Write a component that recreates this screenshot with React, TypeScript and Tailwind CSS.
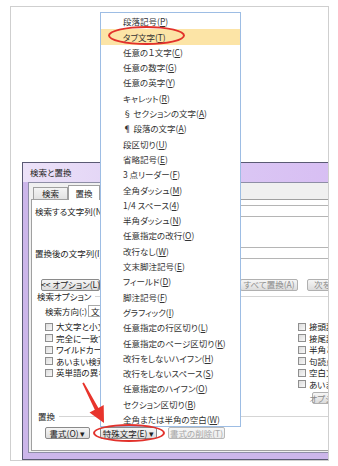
import React from "react";

const jp = "font-['Noto_Sans_CJK_JP','Liberation_Sans',sans-serif] [font-feature-settings:'palt']";

// 特殊文字メニューの項目 [ラベル, アクセスキー]
const menuItems: [string, string][] = [
  ["段落記号", "P"],
  ["タブ文字", "T"],
  ["任意の１文字", "C"],
  ["任意の数字", "G"],
  ["任意の英字", "Y"],
  ["キャレット", "R"],
  ["§ セクションの文字", "A"],
  ["¶ 段落の文字", "A"],
  ["段区切り", "U"],
  ["省略記号", "E"],
  ["3 点リーダー", "F"],
  ["全角ダッシュ", "M"],
  ["1/4 スペース", "4"],
  ["半角ダッシュ", "N"],
  ["任意指定の改行", "O"],
  ["改行なし", "W"],
  ["文末脚注記号", "E"],
  ["フィールド", "D"],
  ["脚注記号", "F"],
  ["グラフィック", "I"],
  ["任意指定の行区切り", "L"],
  ["任意指定のページ区切り", "K"],
  ["改行をしないハイフン", "H"],
  ["改行をしないスペース", "S"],
  ["任意指定のハイフン", "O"],
  ["セクション区切り", "B"],
  ["全角または半角の空白", "W"],
];

const leftChecks = [
  "大文字と小文字を区別する",
  "完全に一致する単語だけを検索する",
  "ワイルドカードを使用する",
  "あいまい検索 (英)",
  "英単語の異なる活用形も検索する",
];

const rightChecks = [
  "接頭辞に一致する",
  "接尾辞に一致する",
  "半角と全角を区別する",
  "句読点を無視する",
  "空白文字を無視する",
  "あいまい検索 (日)",
];

function Check({ label }: { label: string }) {
  return (
    <div className="flex items-center h-[11.5px] gap-[3px] whitespace-nowrap">
      <span className="w-[8px] h-[8px] border border-[#8f8f8f] bg-linear-to-br from-[#dcdcdc] to-[#f8f8f8] shrink-0" />
      <span>{label}</span>
    </div>
  );
}

function Btn({
  children,
  className = "",
}: {
  children: React.ReactNode;
  className?: string;
}) {
  return (
    <div
      className={
        "h-[12px] shrink-0 flex items-center justify-center whitespace-nowrap rounded-[2px] border border-[#8a8a8a] bg-linear-to-b from-[#f6f6f6] to-[#dcdcdc] " +
        className
      }
    >
      {children}
    </div>
  );
}

export default function App() {
  return (
    <div className={"w-[338px] h-[466px] bg-white pt-[6px] pl-[10px] text-[8.5px] text-[#222] " + jp}>
      <div className="relative w-[319px] h-[455px] border border-[#cfcfcf] overflow-hidden">
        {/* 検索と置換 ダイアログ */}
        <div className="ml-[11px] mt-[155px] w-[330px] h-[298px] border border-[#5a5a74] bg-[#ccb6ea] flex flex-col">
          <div className="h-[19px] flex items-center pl-[7px] bg-linear-to-r from-[#ece2f8] via-[#dccaf4] to-[#d7bdf3]">
            検索と置換
          </div>
          <div className="flex-1 ml-[5px] mb-[6px] border border-[#8e8ea6] bg-[#f0f0f0] pl-[2px] flex flex-col">
            {/* タブ */}
            <div className="h-[16px] flex items-end pl-[2px]">
              <div className="h-[12px] w-[35px] shrink-0 flex items-center justify-center border border-b-0 border-[#a0a0a0] bg-linear-to-b from-[#f4f4f4] to-[#e2e2e2]">
                検索
              </div>
              <div className="h-[15px] w-[32px] shrink-0 flex items-center justify-center border border-b-0 border-[#a0a0a0] bg-white -mb-[1px] relative z-10">
                置換
              </div>
            </div>
            {/* タブパネル */}
            <div className="flex-1 border border-[#a0a0a0] bg-white flex flex-col mb-[1px]">
              <div className="mt-[5px] h-[12px] flex items-center">
                <span className="pl-[3px] w-[80px] shrink-0 whitespace-nowrap">検索する文字列(N):</span>
                <div className="flex-1 h-[12px] border border-[#b5b5b5]" />
              </div>
              <div className="mt-[30px] h-[12px] flex items-center">
                <span className="pl-[3px] w-[80px] shrink-0 whitespace-nowrap">置換後の文字列(I):</span>
                <div className="flex-1 h-[12px] border border-[#b5b5b5]" />
              </div>
              <div className="mt-[19px] h-[13px] flex items-center">
                <Btn className="ml-[9px] w-[59px]">&lt;&lt; オプション(L)</Btn>
                <Btn className="ml-[140px] w-[58px] border-[#b0b0b0] text-[#8a8a8a]">すべて置換(A)</Btn>
                <Btn className="ml-[9px] w-[58px] border-[#b0b0b0] text-[#8a8a8a]">次を検索(F)</Btn>
              </div>
              <div className="h-[10px] flex items-center pl-[5px] gap-[4px]">
                <span className="whitespace-nowrap">検索オプション</span>
                <div className="flex-1 h-px bg-[#d5d5d5]" />
              </div>
              <div className="mt-[4px] h-[12px] flex items-center pl-[13px]">
                <span className="w-[43px] shrink-0 whitespace-nowrap">検索方向(:)</span>
                <div className="w-[60px] h-[12px] shrink-0 border border-[#a8a8a8] flex items-center pl-[2px]">文書全体</div>
              </div>
              <div className="mt-[4px] flex pl-[13px]">
                <div className="w-[253px] shrink-0 flex flex-col">
                  {leftChecks.map((c) => (
                    <Check key={c} label={c} />
                  ))}
                </div>
                <div className="shrink-0 flex flex-col">
                  {rightChecks.map((c) => (
                    <Check key={c} label={c} />
                  ))}
                  <Btn className="ml-[14px] mt-[2px] w-[50px] h-[10px] border-[#b0b0b0] text-[#8a8a8a]">オプション(S)...</Btn>
                </div>
              </div>
              <div className="mt-[7px] h-[10px] flex items-center pl-[6px] gap-[4px]">
                <span>置換</span>
                <div className="flex-1 h-px bg-[#d5d5d5]" />
              </div>
              <div className="mt-[6px] h-[12px] flex items-center">
                <Btn className="ml-[13px] w-[45px]">書式(O) ▾</Btn>
                <Btn className="ml-[10px] w-[57px] border-[#3d7fb3] from-[#bfe6fb] to-[#72bdeb]">特殊文字(E) ▾</Btn>
                <Btn className="ml-[11px] w-[57px] border-[#b8b8b8] from-[#f7f7f7] to-[#ececec] text-[#a8a8a8]">書式の削除(T)</Btn>
              </div>
            </div>
          </div>
        </div>

        {/* 特殊文字メニュー */}
        <div className="absolute left-[89px] top-[5px] w-[141px] h-[415px] border border-[#9dbde4] bg-white pt-[1px] flex flex-col">
          {menuItems.map(([label, key], i) => (
            <div
              key={i}
              className={
                "h-[15.3px] shrink-0 flex items-center pl-[22px] whitespace-nowrap text-[#333] " +
                (i === 1 ? "bg-[#fce4a6]" : "")
              }
            >
              {label}(<span className="underline">{key}</span>)
            </div>
          ))}
        </div>

        {/* 注釈 */}
        <div className="absolute left-[97px] top-[19px] w-[77px] h-[19px] rounded-[50%] border-2 border-[#e2312b]" />
        <div className="absolute left-[82px] top-[417px] w-[72px] h-[18px] rounded-[50%] border-2 border-[#e2312b]" />
        <svg className="absolute left-[70px] top-[375px]" width="26" height="44" viewBox="81 382 26 44">
          <polygon
            points="82.3,383.2 94.8,409.7 89.5,412.5 104,423 103.7,405.1 98.4,407.9 83.9,382.4"
            fill="#e8342c"
          />
        </svg>
      </div>
    </div>
  );
}
